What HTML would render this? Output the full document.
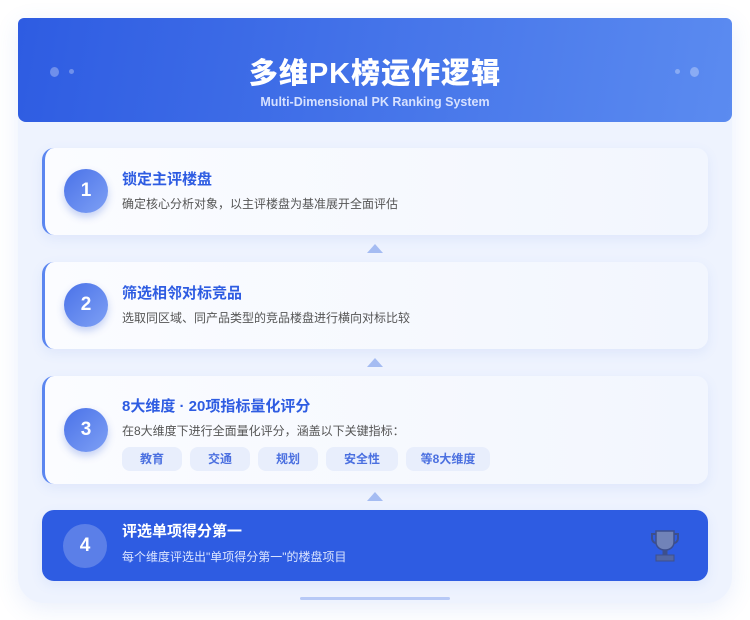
<!DOCTYPE html><html><head><meta charset="utf-8"><style>
*{margin:0;padding:0;box-sizing:border-box}
body{width:750px;height:620px;background:#fff;font-family:"Liberation Sans","Noto Sans CJK SC",sans-serif;position:relative;overflow:hidden}
.wrap{position:absolute;left:18px;top:18px;width:714px;height:585px;background:#eef3fe;border-radius:8px 8px 26px 26px;box-shadow:0 6px 24px rgba(80,120,220,.12)}
.hd{position:absolute;left:0;top:0;width:714px;height:104px;background:linear-gradient(100deg,#2e5ce2,#5b8bf0);border-radius:6px 6px 8px 8px;text-align:center;color:#fff}
.hd h1{font-size:29px;font-weight:900;position:absolute;top:32px;width:100%;letter-spacing:1px}
.hd p{font-size:12.5px;font-weight:bold;color:#d6e1ff;position:absolute;top:77px;width:100%}
.dot{position:absolute;border-radius:50%;background:rgba(255,255,255,.3)}
.card{position:absolute;left:24px;width:666px;background:linear-gradient(90deg,#fbfcff,#f2f6fe);border-radius:12px;border-left:3px solid #5b86f0;box-shadow:0 4px 12px rgba(90,130,230,.1)}
.num{position:absolute;left:19px;width:44px;height:44px;border-radius:50%;background:linear-gradient(135deg,#4a72e8,#7ea0f5);color:#fff;font-weight:bold;font-size:19px;text-align:center;line-height:44px;box-shadow:0 4px 8px rgba(70,110,220,.3)}
.t{position:absolute;left:77px;font-size:15px;font-weight:bold;color:#2e5ce2}
.d{position:absolute;left:77px;font-size:12px;color:#555}
.arr{position:absolute;left:349px;width:0;height:0;border-left:8px solid transparent;border-right:8px solid transparent;border-bottom:9px solid #a5bcf2}
.tag{position:absolute;top:71px;height:24px;border-radius:8px;background:#e8eefc;color:#4b70e0;font-size:12px;font-weight:bold;text-align:center;line-height:24px}
</style></head><body>
<div class="wrap">
<div class="hd"><div class="dot" style="left:32px;top:49px;width:9px;height:10px"></div><div class="dot" style="left:51px;top:51px;width:5px;height:5px"></div><div class="dot" style="left:657px;top:51px;width:5px;height:5px"></div><div class="dot" style="left:672px;top:49px;width:9px;height:10px"></div>
<h1>多维PK榜运作逻辑</h1><p>Multi-Dimensional PK Ranking System</p></div>
<div class="card" style="top:130px;height:87px"><div class="num" style="top:21px">1</div><div class="t" style="top:20px">锁定主评楼盘</div><div class="d" style="top:47px">确定核心分析对象，以主评楼盘为基准展开全面评估</div></div>
<div class="arr" style="top:226px"></div>
<div class="card" style="top:244px;height:87px"><div class="num" style="top:21px">2</div><div class="t" style="top:20px">筛选相邻对标竞品</div><div class="d" style="top:47px">选取同区域、同产品类型的竞品楼盘进行横向对标比较</div></div>
<div class="arr" style="top:340px"></div>
<div class="card" style="top:358px;height:108px"><div class="num" style="top:32px">3</div><div class="t" style="top:19px">8大维度 · 20项指标量化评分</div><div class="d" style="top:46px">在8大维度下进行全面量化评分，涵盖以下关键指标：</div>
<div class="tag" style="left:77px;width:60px">教育</div><div class="tag" style="left:145px;width:60px">交通</div><div class="tag" style="left:213px;width:60px">规划</div><div class="tag" style="left:281px;width:72px">安全性</div><div class="tag" style="left:361px;width:84px">等8大维度</div></div>
<div class="arr" style="top:474px"></div>
<div class="card" style="top:492px;height:71px;background:#2e5ce2;border-left:none"><div class="num" style="top:14px;left:21px;background:rgba(255,255,255,.22);box-shadow:none">4</div><div class="t" style="top:10px;left:80px;color:#fff">评选单项得分第一</div><div class="d" style="top:38px;left:80px;color:#dbe5ff">每个维度评选出"单项得分第一"的楼盘项目</div>
<svg style="position:absolute;left:608px;top:19px" width="30" height="33" viewBox="0 0 30 33"><path d="M6 2h18v11c0 5-4 8-9 8s-9-3-9-8z" fill="#7183b8" stroke="#3d4f8c" stroke-width="1.5"/><path d="M6 5H2v4c0 3 2 5 4 5M24 5h4v4c0 3-2 5-4 5" fill="none" stroke="#3d4f8c" stroke-width="2"/><rect x="12.5" y="21" width="5" height="5" fill="#3d4f8c"/><rect x="6" y="26" width="18" height="6" fill="#5266a4" stroke="#3d4f8c"/></svg></div>
<div style="position:absolute;left:282px;top:579px;width:150px;height:3px;border-radius:2px;background:#b7c9f6"></div>
</div>
</body></html>
